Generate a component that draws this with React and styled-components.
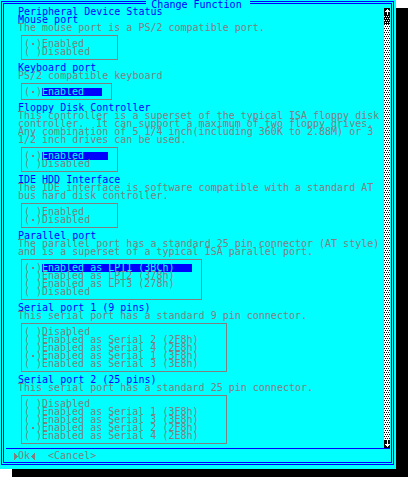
import React, { useState } from "react";
import styled, { createGlobalStyle } from "styled-components";

const BLUE = "#0000ff";
const CYAN = "#00ffff";
const GRAY = "#808080";

const GlobalStyle = createGlobalStyle`
  *, *::before, *::after { box-sizing: border-box; }
  body {
    margin: 0;
    background: #ffffff;
    font: 10px/8px "DejaVu Sans Mono", "Liberation Mono", monospace;
  }
`;

const Screen = styled.main`
  padding: 0 12px 8px 0;
`;

const Dialog = styled.form`
  padding: 1px 2px 4px 1px;
  background: ${CYAN};
  color: ${GRAY};
  box-shadow: 12px 8px 0 #000000;
`;

const Frame = styled.div`
  border: 3px double ${BLUE};
  padding: 0 1px 0 2px;
`;

const Title = styled.h1`
  width: fit-content;
  margin: -4px auto 0;
  padding: 1px 8px 0 5px;
  background: ${CYAN};
  color: ${BLUE};
  font: inherit;
  line-height: 7px;
`;

const Body = styled.div`
  display: grid;
  grid-template-columns: minmax(0, 1fr) 6px;
`;

const Content = styled.div`
  padding-left: 12px;
`;

const Heading = styled.h2`
  margin: 0;
  color: ${BLUE};
  font: inherit;
`;

const Description = styled.p`
  margin: 0;
  white-space: pre-wrap;
`;

const Options = styled.div`
  width: fit-content;
  margin: 3px 0 4px 3px;
  padding: 4px 9px 3px 2px;
  border: 1px solid ${GRAY};
`;

const Option = styled.label`
  display: grid;
  grid-template-columns: 18px 1fr;
  white-space: pre;
`;

const Radio = styled.input`
  grid-area: 1 / 1;
  width: 18px;
  height: 8px;
  margin: 0;
  appearance: none;
  outline: none;
`;

const Mark = styled.span`
  grid-area: 1 / 1;
  display: grid;
  grid-template-columns: repeat(3, 6px);
`;

const Dot = styled.i`
  place-self: center;
  width: 2px;
  height: 2px;
  background: ${(p) => (p.$on ? GRAY : "transparent")};
`;

const OptionText = styled.span`
  grid-area: 1 / 2;
  padding-right: 18px;
  background: ${(p) => (p.$lit ? BLUE : "transparent")};
  color: ${(p) => (p.$lit ? CYAN : GRAY)};
`;

const ScrollBar = styled.div`
  display: flex;
  flex-direction: column;
  background: #ffffff;
`;

const ScrollButton = styled.button`
  display: block;
  height: 8px;
  padding: 0;
  border: 0;
  background: #000000;
`;

const Icon = styled.svg`
  display: block;
  flex: none;
  width: 6px;
  height: 8px;
`;

const Track = styled.svg`
  display: block;
  width: 6px;
  flex: 1 1 0;
  min-height: 0;
`;

const Footer = styled.footer`
  display: flex;
  gap: 12px;
  padding: 3px 6px 2px;
  border-top: 1px solid ${BLUE};
`;

const FooterButton = styled.button`
  display: flex;
  padding: 0;
  border: 0;
  background: none;
  color: ${GRAY};
  font: inherit;
`;

const devices = [
  {
    name: "Mouse port",
    text: "The mouse port is a PS/2 compatible port.",
    options: ["Enabled", "Disabled"],
    chosen: 0,
  },
  {
    name: "Keyboard port",
    text: "PS/2 compatible keyboard",
    options: ["Enabled"],
    chosen: 0,
    lit: true,
  },
  {
    name: "Floppy Disk Controller",
    text: "This controller is a superset of the typical ISA floppy disk controller.  It can support a maximum of two floppy drives. Any combination of 5 1/4 inch(including 360K to 2.88M) or 3 1/2 inch drives can be used.",
    options: ["Enabled", "Disabled"],
    chosen: 0,
    lit: true,
  },
  {
    name: "IDE HDD Interface",
    text: "The IDE interface is software compatible with a standard AT bus hard disk controller.",
    options: ["Enabled", "Disabled"],
    chosen: 1,
  },
  {
    name: "Parallel port",
    text: "The parallel port has a standard 25 pin connector (AT style) and is a superset of a typical ISA parallel port.",
    options: [
      "Enabled as LPT1 (3BCh)",
      "Enabled as LPT2 (378h)",
      "Enabled as LPT3 (278h)",
      "Disabled",
    ],
    chosen: 0,
    lit: true,
  },
  {
    name: "Serial port 1 (9 pins)",
    text: "This serial port has a standard 9 pin connector.",
    options: [
      "Disabled",
      "Enabled as Serial 2 (2F8h)",
      "Enabled as Serial 4 (2E8h)",
      "Enabled as Serial 1 (3F8h)",
      "Enabled as Serial 3 (3E8h)",
    ],
    chosen: 3,
  },
  {
    name: "Serial port 2 (25 pins)",
    text: "This serial port has a standard 25 pin connector.",
    options: [
      "Disabled",
      "Enabled as Serial 1 (3F8h)",
      "Enabled as Serial 3 (3E8h)",
      "Enabled as Serial 2 (2F8h)",
      "Enabled as Serial 4 (2E8h)",
    ],
    chosen: 3,
  },
];

function Device({ device }) {
  const [chosen, setChosen] = useState(device.chosen);
  return (
    <section>
      <Heading>{device.name}</Heading>
      <Description>{device.text}</Description>
      <Options role="radiogroup" aria-label={device.name}>
        {device.options.map((option, i) => (
          <Option key={option}>
            <Radio
              type="radio"
              name={device.name}
              checked={chosen === i}
              onChange={() => setChosen(i)}
            />
            <Mark aria-hidden="true">
              <span>(</span>
              <Dot $on={chosen === i} />
              <span>)</span>
            </Mark>
            <OptionText $lit={device.lit && chosen === i}>{option}</OptionText>
          </Option>
        ))}
      </Options>
    </section>
  );
}

function ScrollTrack() {
  return (
    <Track aria-hidden="true" shapeRendering="crispEdges">
      <defs>
        <pattern id="light" width="2" height="4" patternUnits="userSpaceOnUse">
          <path d="M0 0h1v1h-1zM1 2h1v1h-1z" fill="#000000" />
        </pattern>
        <pattern id="dark" width="2" height="4" patternUnits="userSpaceOnUse">
          <rect width="2" height="4" fill="#000000" />
          <path d="M0 0h1v1h-1zM1 2h1v1h-1z" fill="#ffffff" />
        </pattern>
      </defs>
      <rect width="6" height="100%" fill="url(#light)" />
      <rect width="6" height="8" fill="url(#dark)" />
    </Track>
  );
}

export default function App() {
  return (
    <Screen>
      <GlobalStyle />
      <Dialog onSubmit={(e) => e.preventDefault()}>
        <Frame>
          <Title>Change Function</Title>
          <Body>
            <Content>
              <Heading>Peripheral Device Status</Heading>
              {devices.map((device) => (
                <Device key={device.name} device={device} />
              ))}
            </Content>
            <ScrollBar>
              <ScrollButton type="button" aria-label="Scroll up">
                <Icon viewBox="0 0 6 8" shapeRendering="crispEdges">
                  <path d="M3 1h1v6h-1zM2 2h3v1h-3zM1 3h5v1h-5z" fill="#ffffff" />
                </Icon>
              </ScrollButton>
              <ScrollTrack />
              <ScrollButton type="button" aria-label="Scroll down">
                <Icon viewBox="0 0 6 8" shapeRendering="crispEdges">
                  <path d="M3 0h1v7h-1zM2 5h3v1h-3zM1 4h5v1h-5z" fill="#ffffff" />
                </Icon>
              </ScrollButton>
            </ScrollBar>
          </Body>
          <Footer>
            <FooterButton type="submit">
              <Icon viewBox="0 0 6 8" aria-hidden="true" shapeRendering="crispEdges">
                <path d="M2 1h1v7h-1zM3 2h1v5h-1zM4 3h1v3h-1zM5 4h1v1h-1z" fill={GRAY} />
              </Icon>
              Ok
              <Icon viewBox="0 0 6 8" aria-hidden="true" shapeRendering="crispEdges">
                <path d="M4 1h1v7h-1zM3 2h1v5h-1zM2 3h1v3h-1zM1 4h1v1h-1z" fill={GRAY} />
              </Icon>
            </FooterButton>
            <FooterButton type="button">&lt;Cancel&gt;</FooterButton>
          </Footer>
        </Frame>
      </Dialog>
    </Screen>
  );
}
